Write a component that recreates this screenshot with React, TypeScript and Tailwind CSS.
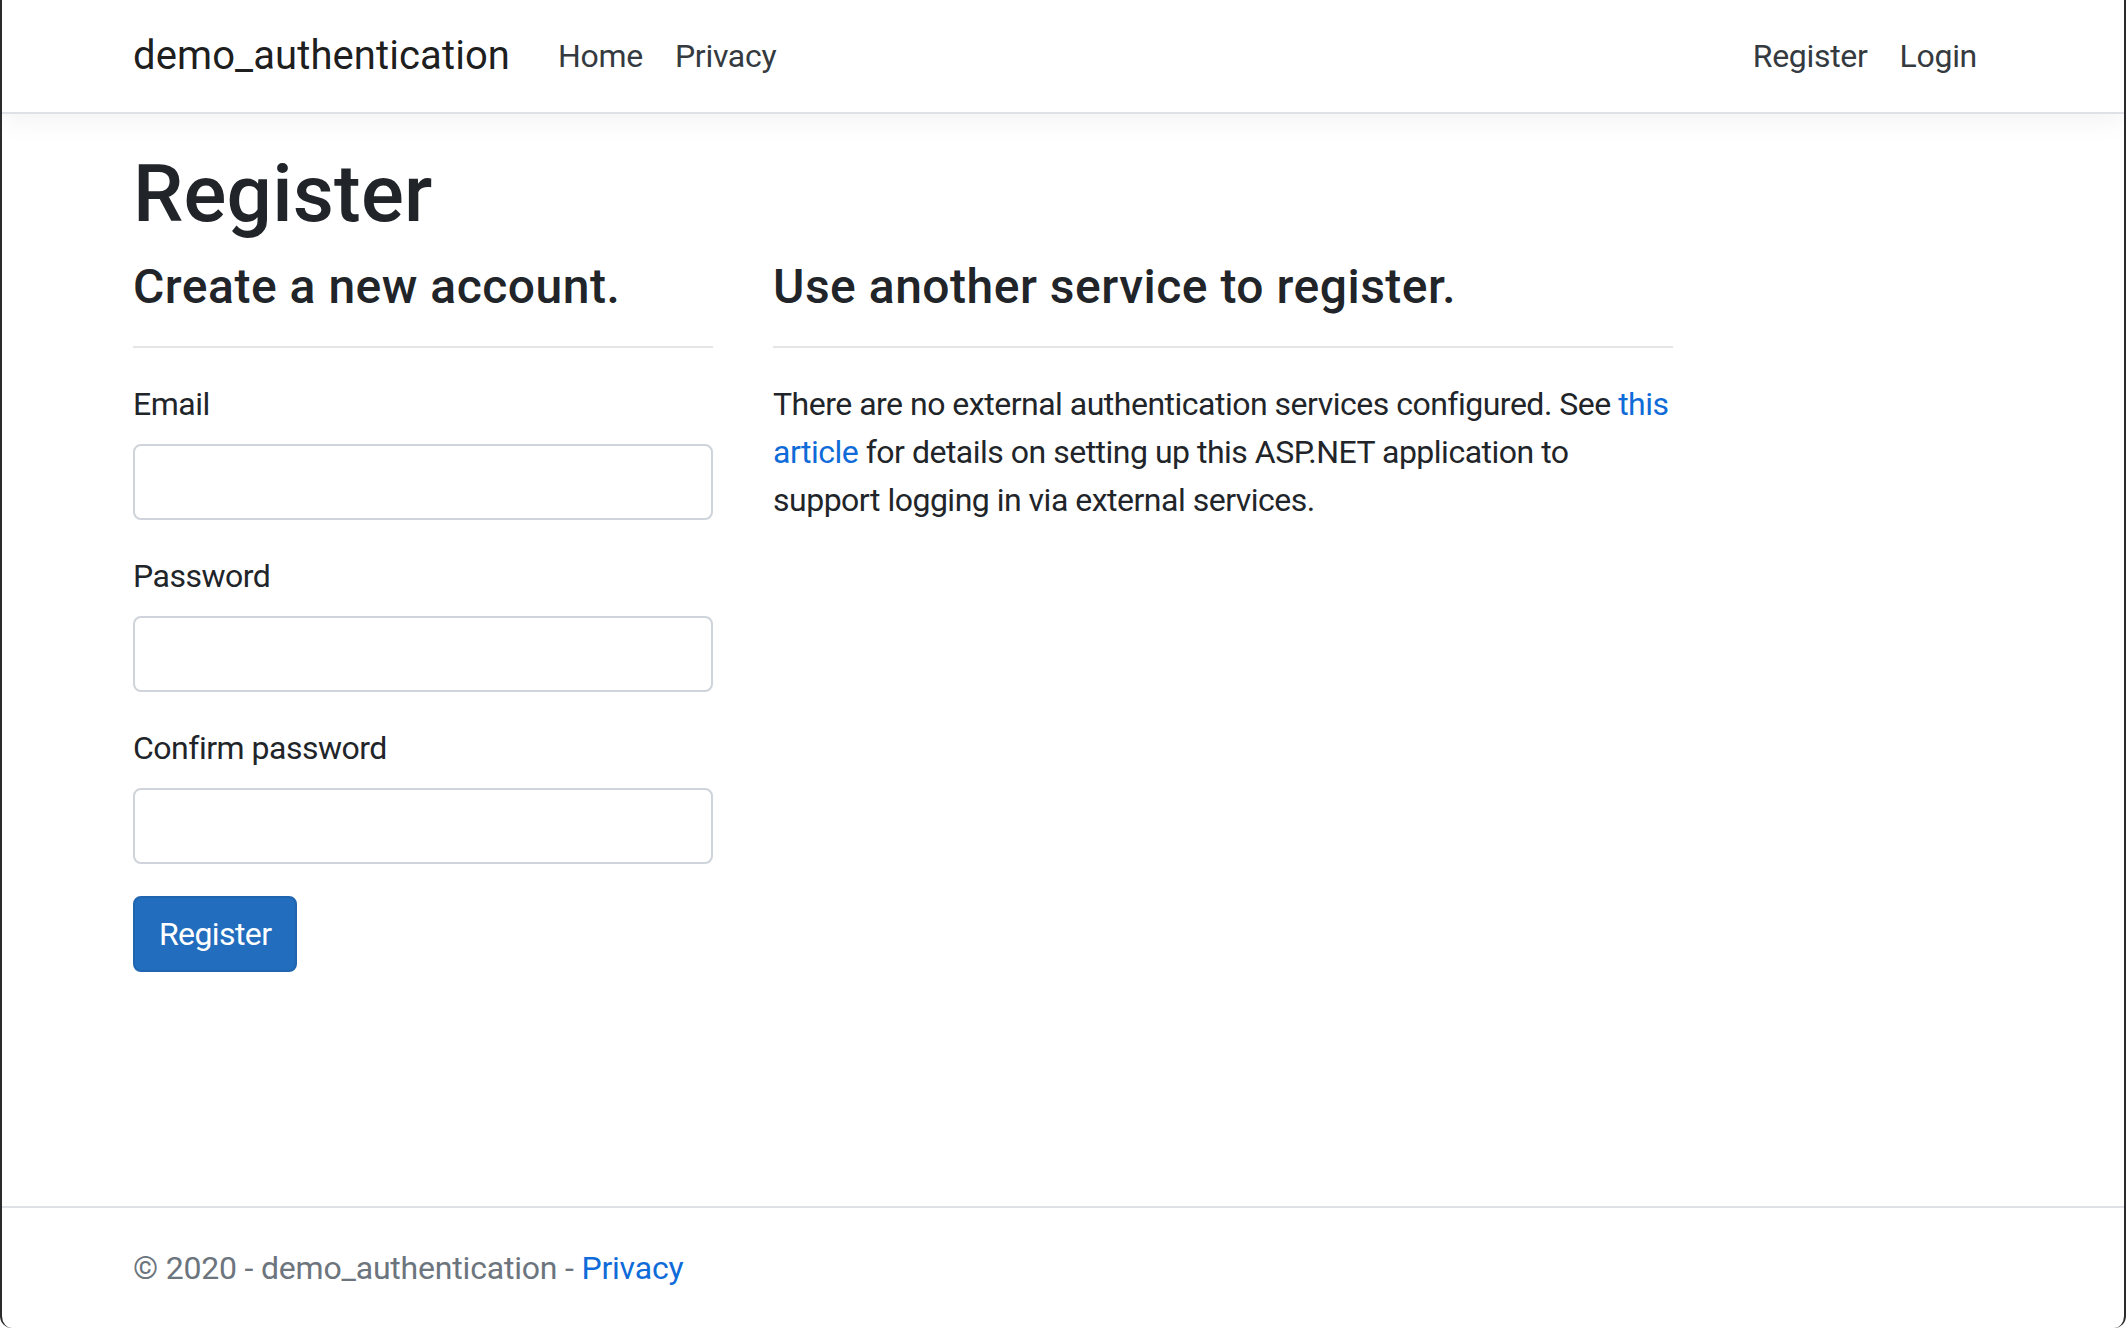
import React from "react";

function NavLink({ children }: { children: React.ReactNode }) {
  return (
    <a href="#" className="px-4 py-4 text-[32px] leading-[48px] tracking-[-0.3px] text-[#343a40] no-underline">
      {children}
    </a>
  );
}

function Field({ label, type }: { label: string; type: string }) {
  return (
    <div className="mb-8">
      <label className="mb-4 block text-[32px] leading-[48px] tracking-[-0.5px]">{label}</label>
      <input
        type={type}
        className="block h-[76px] w-full rounded-[8px] border-2 border-[#ced4da] bg-white px-6 text-[32px] outline-none"
      />
    </div>
  );
}

export default function App() {
  return (
    <div className="flex h-[1328px] w-full flex-col overflow-hidden rounded-b-[12px] border-x-2 border-[#2b2b2b] bg-white font-['Roboto',sans-serif] text-[#212529]">
      <nav className="relative z-10 border-b-2 border-[#dee2e6] bg-white py-4 shadow-[0_8px_24px_rgba(0,0,0,0.05)]">
        <div className="mx-auto flex w-[1920px] items-center px-[30px]">
          <a href="#" className="mr-8 py-[10px] text-[40px] leading-[60px] tracking-[0.1px] text-black/90">
            demo_authentication
          </a>
          <div className="flex flex-1 items-center">
            <NavLink>Home</NavLink>
            <NavLink>Privacy</NavLink>
          </div>
          <div className="flex items-center">
            <NavLink>Register</NavLink>
            <NavLink>Login</NavLink>
          </div>
        </div>
      </nav>

      <main className="mx-auto mt-8 w-[1920px] px-[30px] pb-8">
        <h1 className="mb-4 text-[80px] font-medium leading-[1.2] tracking-[0.2px]">Register</h1>
        <div className="flex">
          <div className="w-[580px] shrink-0">
            <form onSubmit={(e) => e.preventDefault()}>
              <h4 className="text-[48px] font-medium leading-[1.2] tracking-[0.5px]">Create a new account.</h4>
              <hr className="mt-[30px] mb-8 border-t-2 border-[#e5e5e5]" />
              <Field label="Email" type="email" />
              <Field label="Password" type="password" />
              <Field label="Confirm password" type="password" />
              <button
                type="submit"
                className="h-[76px] rounded-[8px] border-2 border-[#1f65b0] bg-[#226dbd] px-6 text-[32px] leading-[48px] tracking-[-0.6px] text-white"
              >
                Register
              </button>
            </form>
          </div>
          <div className="ml-[60px] w-[900px] shrink-0">
            <h4 className="text-[48px] font-medium leading-[1.2] tracking-[0.5px]">Use another service to register.</h4>
            <hr className="mt-[30px] mb-8 border-t-2 border-[#e5e5e5]" />
            <p className="whitespace-nowrap text-[32px] leading-[48px] tracking-[-0.5px]">
              There are no external authentication services configured. See{" "}
              <a href="#" className="text-[#0f6bd8]">this</a>
              <br />
              <a href="#" className="text-[#0f6bd8]">article</a> for details on setting up this ASP.NET application to
              <br />
              support logging in via external services.
            </p>
          </div>
        </div>
      </main>

      <footer className="mt-auto border-t-2 border-[#dee2e6] text-[32px] leading-[120px] tracking-[-0.2px] text-[#6c757d]">
        <div className="mx-auto w-[1920px] whitespace-nowrap px-[30px]">
          © 2020 - demo_authentication - <a href="#" className="text-[#0f6bd8]">Privacy</a>
        </div>
      </footer>
    </div>
  );
}
